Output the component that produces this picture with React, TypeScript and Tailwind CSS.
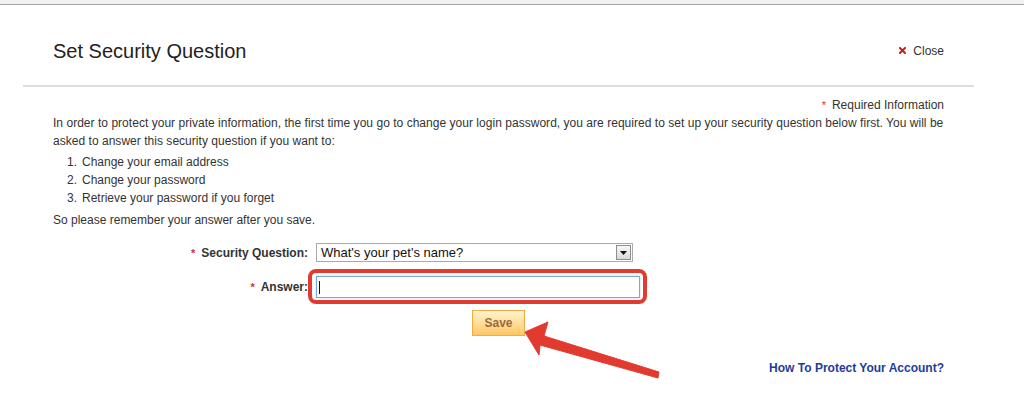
import { useState } from "react";

const font = "font-['Liberation_Sans',Arial,sans-serif]";

function Required() {
  return <span className="mr-[6px] text-[11px] text-[#d6302a]">*</span>;
}

function FakeSelect({ value }: { value: string }) {
  return (
    <div className="flex h-[19px] w-[317px] items-stretch border border-[#a9a9a9] bg-white">
      <div className="flex flex-1 items-center pl-[4px] text-[13px] leading-none text-[#111]">
        {value}
      </div>
      <div className="m-px flex w-[15px] items-center justify-center border border-[#8d8d8d] bg-gradient-to-b from-[#f7f7f7] to-[#d9d9d9]">
        <svg width="7" height="4" viewBox="0 0 7 4">
          <path d="M0 0h7L3.5 4z" fill="#111" />
        </svg>
      </div>
    </div>
  );
}

export default function App() {
  const [answer, setAnswer] = useState("");

  return (
    <div className={`relative min-h-screen w-full overflow-hidden bg-white text-[12px] text-[#333] ${font}`}>
      <div className="h-[5px] border-b border-[#a3a3a3] bg-[#f2f2f2]" />

      <div className="ml-[23px] w-[951px]">
        <header className="flex h-[82px] items-center justify-between border-b-2 border-[#dedede] px-[30px] pt-[11px]">
          <h1 className="text-[20px] leading-[24px] text-[#222]">Set Security Question</h1>
          <button className="flex items-center gap-[7px] text-[12px] text-[#333]">
            <svg width="7" height="7" viewBox="0 0 7 7">
              <path d="M1 1l5 5M6 1L1 6" stroke="#cc1f1a" strokeWidth="2" strokeLinecap="square" />
            </svg>
            Close
          </button>
        </header>

        <main className="px-[30px] pt-[9px] leading-[18px]">
          <div className="text-right">
            <Required />
            Required Information
          </div>
          <p className="whitespace-nowrap tracking-[0.03px]">
            In order to protect your private information, the first time you go to change your login password, you are
            required to set up your security question below first. You will be
            <br />
            asked to answer this security question if you want to:
          </p>
          <ol className="mt-[3px] pl-[14px]">
            {["Change your email address", "Change your password", "Retrieve your password if you forget"].map(
              (item, i) => (
                <li key={item} className="flex">
                  <span className="w-[15px]">{i + 1}.</span>
                  {item}
                </li>
              ),
            )}
          </ol>
          <p className="mt-[4px]">So please remember your answer after you save.</p>

          <div className="mt-[14px] flex items-center">
            <label className="w-[255px] text-right font-bold">
              <Required />
              Security Question:
            </label>
            <div className="ml-[8px]">
              <FakeSelect value="What's your pet's name?" />
            </div>
          </div>

          <div className="mt-[14px] flex items-center">
            <label className="w-[255px] text-right font-bold">
              <Required />
              Answer:
            </label>
            <div className="relative ml-[8px]">
              <div className="relative h-[22px] w-[324px] border border-[#7fa6d8] bg-white shadow-[0_0_2px_#b9d2f0]">
                <input
                  value={answer}
                  onChange={(e) => setAnswer(e.target.value)}
                  className="h-full w-full bg-transparent px-[2px] text-[13px] outline-none"
                />
                <span className="absolute left-[2px] top-[4px] h-[13px] w-px bg-[#111]" />
              </div>
              <div className="pointer-events-none absolute -bottom-[6px] -left-[8px] -right-[7px] -top-[7px] rounded-[8px] border-4 border-[#e23a2f]" />
            </div>
          </div>

          <div className="mt-[12px] flex justify-center">
            <button className="h-[26px] w-[53px] border border-[#f2ac45] bg-gradient-to-b from-[#fff3cf] to-[#ffc760] text-[12px] font-bold text-[#9b6a3c]">
              Save
            </button>
          </div>

          <div className="mt-[23px] text-right">
            <a href="#" className="font-bold text-[#1d3d99]">
              How To Protect Your Account?
            </a>
          </div>
        </main>
      </div>

      {/* annotation arrow */}
      <svg className="pointer-events-none absolute left-0 top-0" width="1024" height="393" viewBox="0 0 1024 393">
        <polygon
          points="525,332 548,322 544,336 659,372 658,378 540,345 539,355"
          fill="#e23a2f"
          stroke="#e23a2f"
          strokeWidth="1"
          strokeLinejoin="round"
        />
      </svg>
    </div>
  );
}
